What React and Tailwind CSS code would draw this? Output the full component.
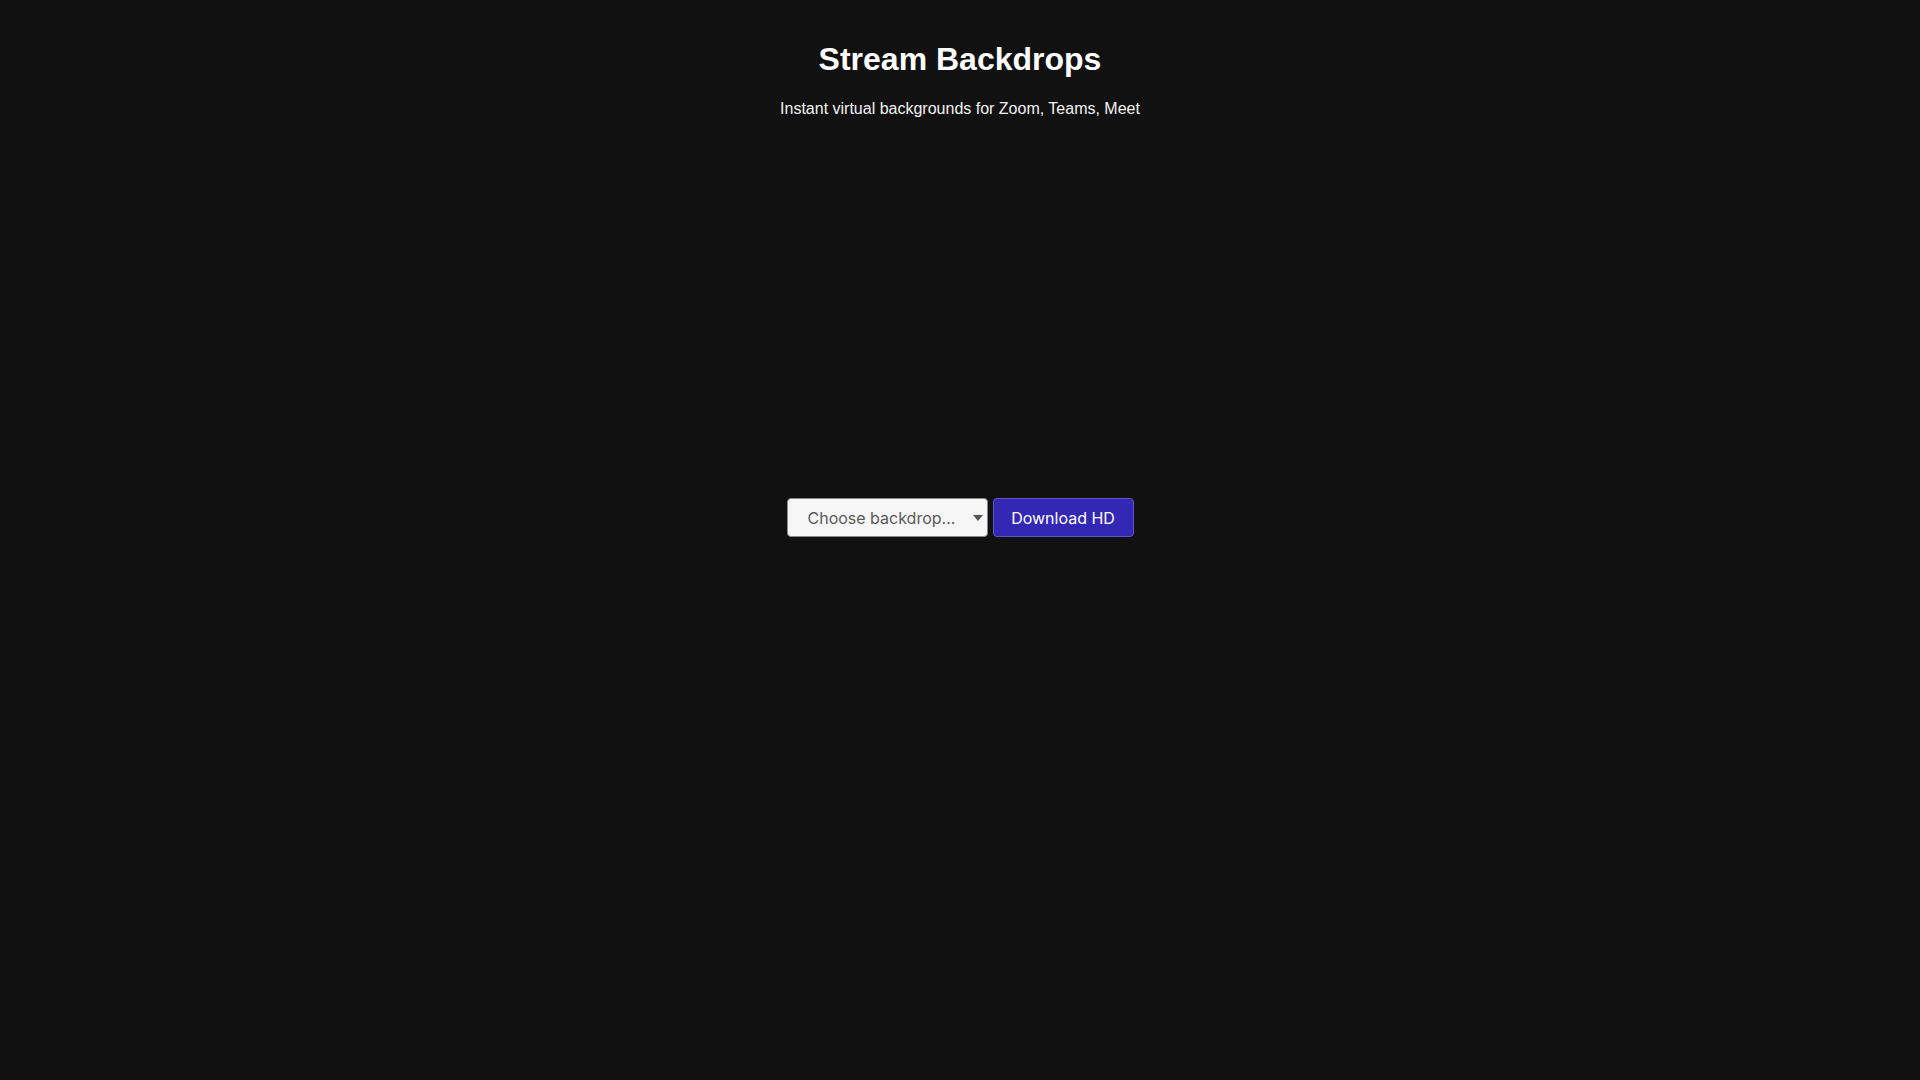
import React from 'react';

export default function App() {
    return (
        <div className="min-h-screen bg-[#111111] text-white flex flex-col items-center pt-[41px]">
            <h1 className="text-[32px] leading-[36px] font-bold font-['Liberation_Sans',Arial,sans-serif]">Stream Backdrops</h1>
            <p className="mt-[23px] text-[16px] leading-[18px] text-[#f2f2f2] font-['Liberation_Sans',Arial,sans-serif]">
                Instant virtual backgrounds for Zoom, Teams, Meet
            </p>

            {/* preview area, empty until a backdrop is picked */}
            <div className="h-[380px] w-[640px]"></div>

            <div className="flex items-center gap-[5px] font-['Inter',sans-serif] text-[16px]">
                <div className="relative w-[201px] h-[39px] bg-[#f6f6f6] border border-[#8a8a8a] rounded-[4px] flex items-center pl-[20px] text-[#5a5a5a]">
                    <span>Choose backdrop...</span>
                    <svg className="absolute right-[4px] top-1/2 -translate-y-1/2" width="10" height="6" viewBox="0 0 10 6">
                        <path d="M0 0 L10 0 L5 6 Z" fill="#555" />
                    </svg>
                </div>
                <button className="w-[141px] h-[39px] bg-[#3328b6] border border-[#5d56c4] rounded-[4px] text-white text-[16px]">
                    Download HD
                </button>
            </div>
        </div>
    );
}
